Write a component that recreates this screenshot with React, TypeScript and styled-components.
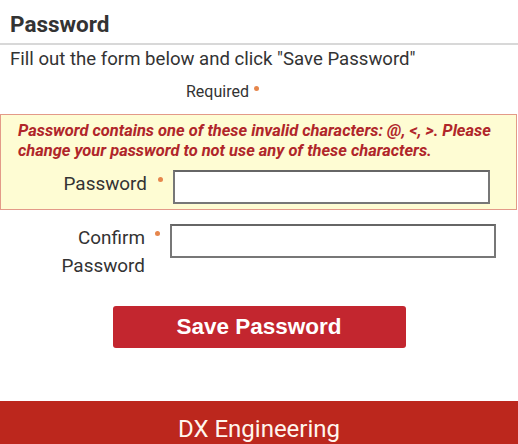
import styled, { createGlobalStyle } from "styled-components";

const GlobalStyle = createGlobalStyle`
  body {
    margin: 0;
    background: #fff;
    font-family: Roboto, "Liberation Sans", sans-serif;
    color: #333;
  }
`;

const Page = styled.div`
  width: 518px;
  overflow: hidden;
`;

const Title = styled.h2`
  margin: 0;
  padding: 10px 10px 4px;
  font-size: 22.5px;
  line-height: 29px;
  font-weight: 700;
  color: #333;
  border-bottom: 2px solid #d8d8d8;
`;

const Intro = styled.p`
  margin: 3px 0 0;
  padding: 0 10px;
  font-size: 18.6px;
  line-height: 22px;
`;

const RequiredNote = styled.div`
  margin-top: 12px;
  padding-left: 186px;
  font-size: 16px;
  line-height: 20px;
  display: flex;
  align-items: flex-start;
  gap: 5px;
`;

type DotProps = { top?: number };

const Dot = styled.span<DotProps>`
  display: inline-block;
  width: 5px;
  height: 5px;
  border-radius: 50%;
  background: #e6864c;
  margin-top: ${(p) => p.top ?? 5}px;
`;

const ErrorBox = styled.div`
  margin-top: 12px;
  width: 517px;
  box-sizing: border-box;
  background: #fefcd3;
  border: 1px solid #e39a88;
  padding: 6px 17px 5px;
`;

const ErrorText = styled.div`
  font-size: 16.45px;
  line-height: 20px;
  font-weight: 700;
  font-style: italic;
  color: #b0262a;
`;

type RowProps = { mt: number };

const FieldRow = styled.div<RowProps>`
  display: flex;
  align-items: flex-start;
  margin-top: ${(p) => p.mt}px;
`;

type LabelProps = { w: number; pt: number };

const Label = styled.label<LabelProps>`
  width: ${(p) => p.w}px;
  flex: none;
  text-align: right;
  font-size: 18.9px;
  line-height: 28px;
  padding-top: ${(p) => p.pt}px;
  color: #333;
`;

type StarProps = { w: number };

const StarCell = styled.div<StarProps>`
  width: ${(p) => p.w}px;
  flex: none;
  display: flex;
  justify-content: center;
  padding-top: 7px;
`;

type InputProps = { w: number };

const Input = styled.input<InputProps>`
  width: ${(p) => p.w}px;
  height: 34px;
  box-sizing: border-box;
  border: 2px solid #777;
  border-top-color: #666;
  background: #fff;
  margin: 0;
  flex: none;
`;

const ButtonRow = styled.div`
  display: flex;
  justify-content: center;
  margin-top: 26px;
`;

const SaveButton = styled.button`
  width: 293px;
  height: 42px;
  border: none;
  border-radius: 3px;
  background: #c3262f;
  color: #fff;
  font-family: "Liberation Sans", Arial, sans-serif;
  font-weight: 700;
  font-size: 22.5px;
  padding: 0;
`;

const Footer = styled.footer`
  margin-top: 53px;
  background: #bc271d;
  color: #fff6ee;
  text-align: center;
  font-size: 24px;
  line-height: 30px;
  padding: 13px 0 20px;
`;

function App() {
  return (
    <>
      <GlobalStyle />
      <Page>
        <Title>Password</Title>
        <Intro>Fill out the form below and click "Save Password"</Intro>
        <RequiredNote>
          Required <Dot top={4} />
        </RequiredNote>
        <ErrorBox>
          <ErrorText>
            Password contains one of these invalid characters: @, &lt;, &gt;. Please
            change your password to not use any of these characters.
          </ErrorText>
          <FieldRow mt={9}>
            <Label w={129} pt={0}>Password</Label>
            <StarCell w={26}>
              <Dot top={0} />
            </StarCell>
            <Input w={317} type="password" />
          </FieldRow>
        </ErrorBox>
        <FieldRow mt={14}>
          <Label w={145} pt={0}>
            Confirm
            <br />
            Password
          </Label>
          <StarCell w={25}>
            <Dot top={0} />
          </StarCell>
          <Input w={326} type="password" />
        </FieldRow>
        <ButtonRow>
          <SaveButton>Save Password</SaveButton>
        </ButtonRow>
        <Footer>DX Engineering</Footer>
      </Page>
    </>
  );
}

export default App;
